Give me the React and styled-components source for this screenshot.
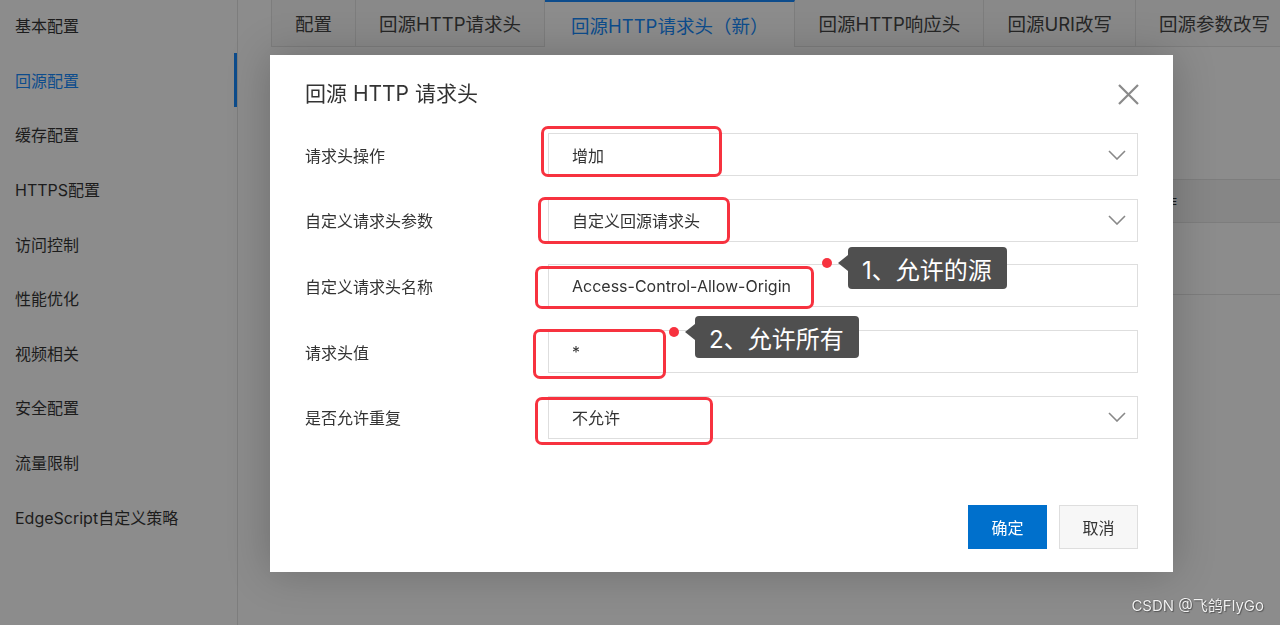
import styled, { createGlobalStyle } from "styled-components"

const FONT = `Inter, "Noto Sans CJK SC", sans-serif`

// the console behind the dialog is shown dimmed, so its palette is the dimmed one
const BG = '#8c8c8c'
const TEXT = '#1c1c1c'
const LINE = '#7d7d7d'
const TAB_BG = '#898989'
const HEAD_BG = '#868686'
const DIM_BLUE = '#0d4c8c'

const GlobalStyle = createGlobalStyle`
    html, body { margin:0; padding:0; background-color:${BG}; }
    body {
        font-family: ${FONT};
        color:${TEXT};
    }
    *, *::before, *::after { box-sizing:border-box; }
`

const Page = styled.div`
    display:flex;
    height:100vh;
    overflow:hidden;
    background-color:${BG};
`

const Sidebar = styled.nav`
    width:238px;
    flex-shrink:0;
    background-color:${BG};
    border-right:1px solid ${LINE};
`

const NavList = styled.ul`
    list-style:none;
    margin:-2px 0 0;
    padding:0;
`

const NavItem = styled.li`
    height:54.6px;
    display:flex;
    align-items:center;
    padding-left:15px;
    font-size:16px;
    color:${p => p.$active ? DIM_BLUE : TEXT};
    box-shadow:${p => p.$active ? `inset -3px 0 0 ${DIM_BLUE}` : 'none'};
`

const Main = styled.main`
    flex:1;
    min-width:0;
    padding-left:33px;
    overflow:hidden;
    background-color:${BG};
`

const TabBar = styled.div`
    display:flex;
    height:47px;
`

const Tab = styled.div`
    flex-shrink:0;
    height:47px;
    padding:0 ${p => p.$active ? '26px' : '23px'};
    display:flex;
    align-items:center;
    font-size:18.5px;
    white-space:nowrap;
    color:${p => p.$active ? DIM_BLUE : '#262626'};
    background-color:${p => p.$active ? BG : TAB_BG};
    border-right:1px solid ${LINE};
    border-left:${p => p.$first ? `1px solid ${LINE}` : 'none'};
    border-top:${p => p.$active ? `2px solid ${DIM_BLUE}` : 'none'};
    border-bottom:${p => p.$active ? 'none' : `1px solid ${LINE}`};
`

const Toolbar = styled.div`
    height:132px;
    display:flex;
    align-items:center;
`

const AddButton = styled.button`
    height:36px;
    padding:0 18px;
    font:inherit;
    font-size:14px;
    background-color:#003e70;
    color:${BG};
    border:none;
`

const Table = styled.div`
    border-top:1px solid ${LINE};
`

const TableRow = styled.div`
    display:grid;
    grid-template-columns:repeat(3, 1fr) 147px;
    align-items:center;
    height:${p => p.$head ? '43px' : '72px'};
    background-color:${p => p.$head ? HEAD_BG : BG};
    border-bottom:1px solid ${LINE};
    font-size:14px;
`

const Cell = styled.div`
    padding:0 16px;
    white-space:nowrap;
    overflow:hidden;
`

// layer over the whole console; the dialog sits in it by flow
const Backdrop = styled.div`
    position:fixed;
    top:0;
    left:0;
    right:0;
    bottom:0;
    z-index:10;
    padding:55px 0 0 270px;
`

const Modal = styled.div`
    width:903px;
    background-color:#fff;
    color:#333;
    padding:26px 35px 23px;
    box-shadow:0 0 40px rgba(0,0,0,0.22);
`

const ModalHeader = styled.div`
    display:flex;
    align-items:center;
    justify-content:space-between;
    height:26px;
`

const Title = styled.h2`
    margin:0;
    font-size:21px;
    line-height:26px;
    font-weight:400;
    color:#333;
`

const CloseButton = styled.button`
    width:22px;
    height:22px;
    margin-right:-1px;
    padding:0;
    border:none;
    background:none;
    display:flex;
    align-items:center;
    justify-content:center;
`

const Form = styled.div`
    margin-top:26px;
    display:flex;
    flex-direction:column;
    gap:22.7px;
`

const FormRow = styled.div`
    display:grid;
    grid-template-columns:243px 1fr;
    align-items:center;
`

const Label = styled.div`
    font-size:16px;
    color:#333;
`

const Control = styled.div`
    position:relative;
    height:43px;
    border:1px solid #dedede;
    padding:0 11px 0 23px;
    display:flex;
    align-items:center;
    justify-content:space-between;
    font-size:16px;
    color:#333;
`

const Highlight = styled.div`
    position:absolute;
    left:${p => p.$x}px;
    top:${p => p.$y}px;
    width:${p => p.$w}px;
    height:${p => p.$h}px;
    border:3px solid #f7323f;
    border-radius:7px;
    pointer-events:none;
`

const Callout = styled.div`
    position:absolute;
    left:${p => p.$x}px;
    top:${p => p.$y}px;
    display:flex;
    align-items:flex-start;
    z-index:2;
`

const Dot = styled.span`
    width:10px;
    height:10px;
    margin-top:11px;
    border-radius:50%;
    background-color:#f7323f;
`

const Arrow = styled.span`
    margin:8px 0 0 6px;
    width:0;
    height:0;
    border-top:8px solid transparent;
    border-bottom:8px solid transparent;
    border-right:10px solid #4f4f4f;
`

const Bubble = styled.div`
    height:42px;
    padding:0 15px 0 14px;
    display:flex;
    align-items:center;
    background-color:#4f4f4f;
    border-radius:4px;
    color:#fff;
    font-size:24px;
    white-space:nowrap;
`

const Footer = styled.div`
    margin-top:66px;
    display:flex;
    justify-content:flex-end;
    gap:12px;
`

const Button = styled.button`
    width:79px;
    height:44px;
    font:inherit;
    font-size:16px;
    cursor:pointer;
    color:${p => p.$primary ? '#fff' : '#333'};
    background-color:${p => p.$primary ? '#0070cc' : '#f7f7f7'};
    border:1px solid ${p => p.$primary ? '#0070cc' : '#dedede'};
`

const Watermark = styled.div`
    position:fixed;
    right:16px;
    bottom:10px;
    z-index:30;
    font-size:15px;
    color:#f2f2f2;
    text-shadow:0 0 1px rgba(0,0,0,0.6), 1px 1px 1px rgba(0,0,0,0.35);
`

const Chevron = () =>
    <svg width="18" height="10" viewBox="0 0 18 10">
        <polyline points="1,1 9,9 17,1" fill="none" stroke="#888" strokeWidth="1.6" />
    </svg>

const CloseIcon = () =>
    <svg width="21" height="21" viewBox="0 0 21 21">
        <path d="M1 1 L20 20 M20 1 L1 20" stroke="#8a8a8a" strokeWidth="2.2" />
    </svg>

const navItems = ['基本配置', '回源配置', '缓存配置', 'HTTPS配置', '访问控制', '性能优化', '视频相关', '安全配置', '流量限制', 'EdgeScript自定义策略']
const tabs = ['配置', '回源HTTP请求头', '回源HTTP请求头（新）', '回源HTTP响应头', '回源URI改写', '回源参数改写']

export default function App(){
    return <>
        <GlobalStyle />
        <Page>
            <Sidebar>
                <NavList>
                    {navItems.map(item =>
                        <NavItem key={item} $active={item === '回源配置'}>{item}</NavItem>
                    )}
                </NavList>
            </Sidebar>
            <Main>
                <TabBar>
                    {tabs.map((t, i) =>
                        <Tab key={t} $first={i === 0} $active={i === 2}>{t}</Tab>
                    )}
                </TabBar>
                <Toolbar>
                    <AddButton>添加</AddButton>
                </Toolbar>
                <Table>
                    <TableRow $head>
                        <Cell>请求头操作</Cell>
                        <Cell>请求头名称</Cell>
                        <Cell>请求头值</Cell>
                        <Cell>操作</Cell>
                    </TableRow>
                    <TableRow>
                        <Cell></Cell>
                        <Cell></Cell>
                        <Cell></Cell>
                        <Cell></Cell>
                    </TableRow>
                </Table>
            </Main>
        </Page>

        <Backdrop>
            <Modal>
                <ModalHeader>
                    <Title>回源 HTTP 请求头</Title>
                    <CloseButton><CloseIcon /></CloseButton>
                </ModalHeader>
                <Form>
                    <FormRow>
                        <Label>请求头操作</Label>
                        <Control>
                            <span>增加</span>
                            <Chevron />
                            <Highlight $x={-8} $y={-8} $w={181} $h={51} />
                        </Control>
                    </FormRow>
                    <FormRow>
                        <Label>自定义请求头参数</Label>
                        <Control>
                            <span>自定义回源请求头</span>
                            <Chevron />
                            <Highlight $x={-11} $y={-3} $w={192} $h={47} />
                        </Control>
                    </FormRow>
                    <FormRow>
                        <Label>自定义请求头名称</Label>
                        <Control>
                            <span>Access-Control-Allow-Origin</span>
                            <Highlight $x={-14} $y={1} $w={279} $h={43} />
                            <Callout $x={273} $y={-18}>
                                <Dot />
                                <Arrow />
                                <Bubble>1、允许的源</Bubble>
                            </Callout>
                        </Control>
                    </FormRow>
                    <FormRow>
                        <Label>请求头值</Label>
                        <Control>
                            <span>*</span>
                            <Highlight $x={-16} $y={-2} $w={133} $h={50} />
                            <Callout $x={120} $y={-15}>
                                <Dot />
                                <Arrow />
                                <Bubble>2、允许所有</Bubble>
                            </Callout>
                        </Control>
                    </FormRow>
                    <FormRow>
                        <Label>是否允许重复</Label>
                        <Control>
                            <span>不允许</span>
                            <Chevron />
                            <Highlight $x={-14} $y={0} $w={178} $h={48} />
                        </Control>
                    </FormRow>
                </Form>
                <Footer>
                    <Button $primary>确定</Button>
                    <Button>取消</Button>
                </Footer>
            </Modal>
        </Backdrop>
        <Watermark>CSDN @飞鸽FlyGo</Watermark>
    </>
}
